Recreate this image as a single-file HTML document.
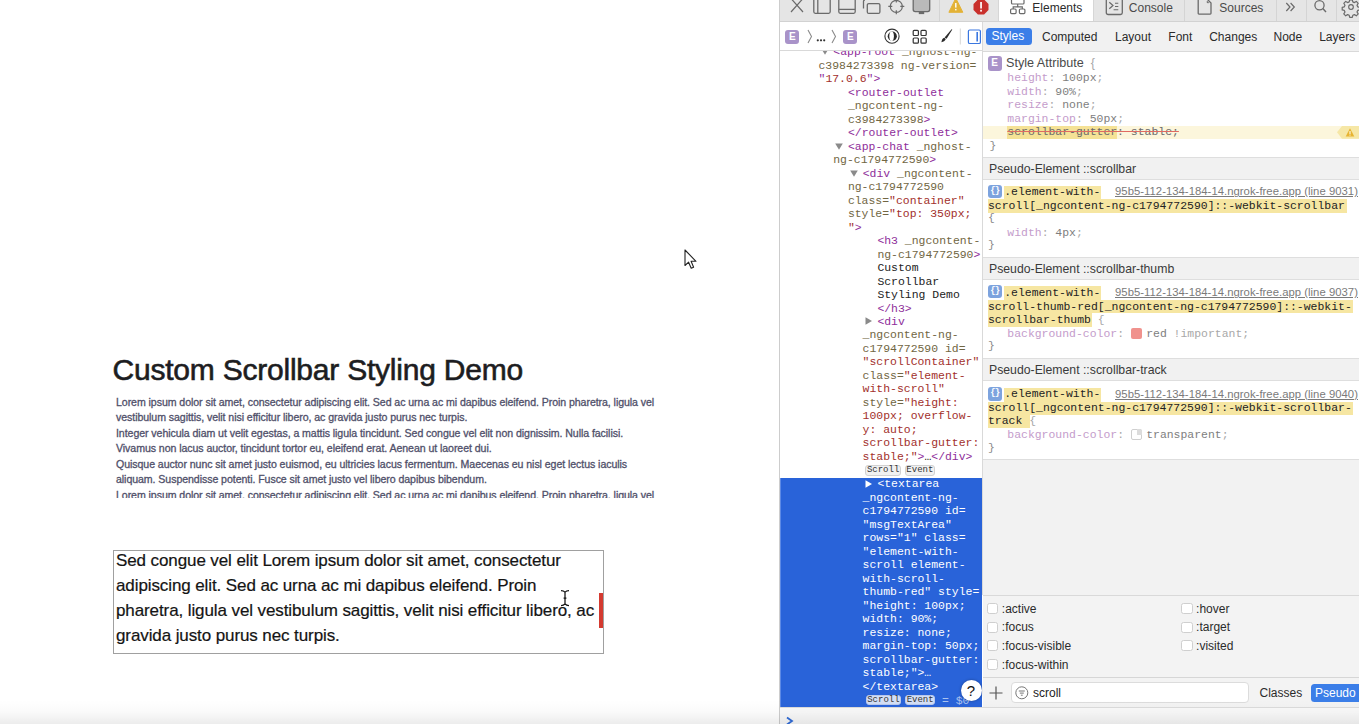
<!DOCTYPE html>
<html><head><meta charset="utf-8">
<style>
*{margin:0;padding:0;box-sizing:border-box}
html,body{width:1359px;height:724px;overflow:hidden;background:#fff;position:relative;font-family:"Liberation Sans",sans-serif}
.a{position:absolute;white-space:pre}
.b{position:absolute}
.tg{color:#8e2d9a}
.an{color:#716643}
.av{color:#a2302c}
.tx{color:#222}
.sel .tg,.sel .an,.sel .av,.sel .tx,.sel{color:#fff}
.pn{color:#c49ccb}
.pv{color:#7e7e7e}
.pu{color:#a8a8a8}
.hl{background:#f6e6a2}
.sa{color:#4a4a4a}
.lk{color:#8a8a8a;text-decoration:underline}
svg{position:absolute;overflow:visible}
</style></head><body>

<div class="b" style="left:0;top:0;width:779px;height:724px;background:#fff"></div>
<div class="a " style="left:112.50px;top:350.96px;font-size:30.00px;line-height:37.50px;font-family:'Liberation Sans',sans-serif;color:#1d1d21;letter-spacing:-0.22px;-webkit-text-stroke:0.6px #1d1d21">Custom Scrollbar Styling Demo</div>
<div class="a " style="left:116.00px;top:395.60px;font-size:10.60px;line-height:13.25px;font-family:'Liberation Sans',sans-serif;color:#50506a;letter-spacing:-0.07px;-webkit-text-stroke:0.3px #50506a">Lorem ipsum dolor sit amet, consectetur adipiscing elit. Sed ac urna ac mi dapibus eleifend. Proin pharetra, ligula vel</div>
<div class="a " style="left:116.00px;top:411.15px;font-size:10.60px;line-height:13.25px;font-family:'Liberation Sans',sans-serif;color:#50506a;letter-spacing:-0.07px;-webkit-text-stroke:0.3px #50506a">vestibulum sagittis, velit nisi efficitur libero, ac gravida justo purus nec turpis.</div>
<div class="a " style="left:116.00px;top:426.70px;font-size:10.60px;line-height:13.25px;font-family:'Liberation Sans',sans-serif;color:#50506a;letter-spacing:-0.07px;-webkit-text-stroke:0.3px #50506a">Integer vehicula diam ut velit egestas, a mattis ligula tincidunt. Sed congue vel elit non dignissim. Nulla facilisi.</div>
<div class="a " style="left:116.00px;top:442.25px;font-size:10.60px;line-height:13.25px;font-family:'Liberation Sans',sans-serif;color:#50506a;letter-spacing:-0.07px;-webkit-text-stroke:0.3px #50506a">Vivamus non lacus auctor, tincidunt tortor eu, eleifend erat. Aenean ut laoreet dui.</div>
<div class="a " style="left:116.00px;top:457.80px;font-size:10.60px;line-height:13.25px;font-family:'Liberation Sans',sans-serif;color:#50506a;letter-spacing:-0.07px;-webkit-text-stroke:0.3px #50506a">Quisque auctor nunc sit amet justo euismod, eu ultricies lacus fermentum. Maecenas eu nisl eget lectus iaculis</div>
<div class="a " style="left:116.00px;top:473.35px;font-size:10.60px;line-height:13.25px;font-family:'Liberation Sans',sans-serif;color:#50506a;letter-spacing:-0.07px;-webkit-text-stroke:0.3px #50506a">aliquam. Suspendisse potenti. Fusce sit amet justo vel libero dapibus bibendum.</div>
<div class="b" style="left:0;top:486px;width:779px;height:12.3px;overflow:hidden">
<div class="a " style="left:116.00px;top:2.90px;font-size:10.60px;line-height:13.25px;font-family:'Liberation Sans',sans-serif;color:#50506a;letter-spacing:-0.07px;-webkit-text-stroke:0.3px #50506a">Lorem ipsum dolor sit amet, consectetur adipiscing elit. Sed ac urna ac mi dapibus eleifend. Proin pharetra, ligula vel</div>
</div>
<div class="b" style="left:113.00px;top:550.00px;width:490.50px;height:103.70px;border:1px solid #a0a0a0;background:#fff"></div>
<div class="a " style="left:116.00px;top:549.98px;font-size:17.00px;line-height:21.25px;font-family:'Liberation Sans',sans-serif;color:#141414;letter-spacing:-0.1px;-webkit-text-stroke:0.2px #141414">Sed congue vel elit Lorem ipsum dolor sit amet, consectetur</div>
<div class="a " style="left:116.00px;top:574.98px;font-size:17.00px;line-height:21.25px;font-family:'Liberation Sans',sans-serif;color:#141414;letter-spacing:-0.1px;-webkit-text-stroke:0.2px #141414">adipiscing elit. Sed ac urna ac mi dapibus eleifend. Proin</div>
<div class="a " style="left:116.00px;top:599.98px;font-size:17.00px;line-height:21.25px;font-family:'Liberation Sans',sans-serif;color:#141414;letter-spacing:-0.1px;-webkit-text-stroke:0.2px #141414">pharetra, ligula vel vestibulum sagittis, velit nisi efficitur libero, ac</div>
<div class="a " style="left:116.00px;top:624.98px;font-size:17.00px;line-height:21.25px;font-family:'Liberation Sans',sans-serif;color:#141414;letter-spacing:-0.1px;-webkit-text-stroke:0.2px #141414">gravida justo purus nec turpis.</div>
<div class="b" style="left:598.50px;top:593.00px;width:4.00px;height:35.00px;background:#d43a30"></div>
<svg style="left:559px;top:589px" width="12" height="18" viewBox="0 0 12 18"><path d="M2 1.5C4 1.5 5 2 6 3.2 7 2 8 1.5 10 1.5M6 3.2V14.8M2 16.5C4 16.5 5 16 6 14.8 7 16 8 16.5 10 16.5M4.6 9H7.4" fill="none" stroke="#fff" stroke-width="2.2"/><path d="M2 1.5C4 1.5 5 2 6 3.2 7 2 8 1.5 10 1.5M6 3.2V14.8M2 16.5C4 16.5 5 16 6 14.8 7 16 8 16.5 10 16.5M4.6 9H7.4" fill="none" stroke="#111" stroke-width="1.25"/></svg>
<svg style="left:684px;top:249px" width="14" height="21" viewBox="0 0 14 21"><path d="M1 1 L1 16.5 L4.6 13.2 L7.2 19.3 L9.6 18.3 L7.1 12.3 L12 12.3 Z" fill="#fff" stroke="#222" stroke-width="1.1" stroke-linejoin="round"/></svg>
<div class="b" style="left:779px;top:0;width:580px;height:724px;background:#fff;border-left:1px solid #cdcdcd"></div>
<div class="b" style="left:780.00px;top:0.00px;width:579.00px;height:22.00px;background:#e5e5e5;border-bottom:1px solid #d2d2d2"></div>
<div class="b" style="left:998.00px;top:0.00px;width:95.50px;height:21.20px;background:#fff;border-left:1px solid #d6d6d6;border-right:1px solid #d6d6d6"></div>
<div class="b" style="left:938.50px;top:0.00px;width:1.00px;height:21.00px;background:#d4d4d4"></div>
<div class="b" style="left:1184.20px;top:0.00px;width:1.00px;height:21.00px;background:#d4d4d4"></div>
<div class="b" style="left:1275.50px;top:0.00px;width:1.00px;height:21.00px;background:#d4d4d4"></div>
<div class="b" style="left:1305.90px;top:0.00px;width:1.00px;height:21.00px;background:#d4d4d4"></div>
<div class="b" style="left:1335.70px;top:0.00px;width:1.00px;height:21.00px;background:#d4d4d4"></div>
<svg style="left:780px;top:0" width="160" height="21" viewBox="0 0 160 21"><path d="M11 -1.5L23 12M23 -1.5L11 12" stroke="#6a6a6a" stroke-width="1.2" fill="none"/><rect x="33.8" y="-2" width="16.4" height="15.3" rx="1.5" fill="none" stroke="#6a6a6a" stroke-width="1.3"/><path d="M37.8 -2V13" stroke="#6a6a6a" stroke-width="1.3"/><rect x="58.8" y="-2" width="16.4" height="15.3" rx="1.5" fill="none" stroke="#6a6a6a" stroke-width="1.3"/><path d="M58.8 9.4H75" stroke="#6a6a6a" stroke-width="1.3"/><path d="M83.5 8.5V1.5c0-1 .5-1.5 1.5-1.5M87 -1.5h8.5" fill="none" stroke="#6a6a6a" stroke-width="1.3"/><rect x="87.3" y="3.6" width="12.6" height="9.8" rx="1.5" fill="none" stroke="#6a6a6a" stroke-width="1.3"/><circle cx="116.3" cy="6.4" r="6" fill="none" stroke="#6a6a6a" stroke-width="1.2"/><path d="M116.3 -1.5V2.5M116.3 10.3V14.3M108.3 6.4H112.3M120.3 6.4H124.3" stroke="#6a6a6a" stroke-width="1.2"/><rect x="133.2" y="-2" width="16.5" height="13.6" rx="2" fill="#b9b9b9" stroke="#6a6a6a" stroke-width="1.3"/><rect x="138.8" y="11.5" width="5.4" height="2.6" fill="#6a6a6a"/></svg>
<svg style="left:940px;top:0" width="60" height="21" viewBox="0 0 60 21"><path d="M15.8 -1.8 L22.8 12.3 L8.9 12.3 Z" fill="#e3b236" stroke="#e3b236" stroke-width="1" stroke-linejoin="round"/><rect x="15.1" y="3" width="1.4" height="4.6" fill="#fff"/><rect x="15.1" y="8.9" width="1.4" height="1.5" fill="#fff"/><path d="M37.9 -0.5 L44.1 -0.5 L48.5 3.9 L48.5 10.1 L44.1 14.5 L37.9 14.5 L33.5 10.1 L33.5 3.9 Z" fill="#c9302c"/><rect x="40.2" y="2" width="1.7" height="6.5" fill="#fff"/><rect x="40.2" y="9.8" width="1.7" height="1.8" fill="#fff"/></svg>
<svg style="left:1008px;top:0" width="20" height="21" viewBox="0 0 20 21"><rect x="3.5" y="-2" width="12.5" height="6" rx="1" fill="none" stroke="#6a6a6a" stroke-width="1.2"/><path d="M9.7 4V6.8M5.2 9V6.8H14.3V9" fill="none" stroke="#6a6a6a" stroke-width="1.2"/><rect x="2.6" y="9" width="5.5" height="4.6" rx="1" fill="none" stroke="#6a6a6a" stroke-width="1.2"/><rect x="11.4" y="9" width="5.5" height="4.6" rx="1" fill="none" stroke="#6a6a6a" stroke-width="1.2"/></svg>
<div class="a " style="left:1032.30px;top:0.54px;font-size:12.00px;line-height:15.00px;font-family:'Liberation Sans',sans-serif;color:#2b2b2b">Elements</div>
<svg style="left:1104px;top:0" width="22" height="21" viewBox="0 0 22 21"><rect x="2.3" y="-1.5" width="16" height="16" rx="1.8" fill="none" stroke="#6a6a6a" stroke-width="1.3"/><path d="M5.3 2.2L9 5.5L5.3 8.8" fill="none" stroke="#6a6a6a" stroke-width="1.2"/><path d="M11 3.2H14.3M11 6.5H14.3M9.6 9.8H14.3" stroke="#6a6a6a" stroke-width="1.1"/></svg>
<div class="a " style="left:1128.80px;top:0.54px;font-size:12.00px;line-height:15.00px;font-family:'Liberation Sans',sans-serif;color:#4a4a4a">Console</div>
<svg style="left:1196px;top:0" width="18" height="21" viewBox="0 0 18 21"><path d="M3 -1.5H10.5L15 3V13.3c0 .5-.3.8-.8.8H3c-.5 0-.8-.3-.8-.8V-1.5" fill="none" stroke="#6a6a6a" stroke-width="1.3"/><path d="M10.8 1.5L12.5 3" stroke="#6a6a6a" stroke-width="1.3"/></svg>
<div class="a " style="left:1219.30px;top:0.54px;font-size:12.00px;line-height:15.00px;font-family:'Liberation Sans',sans-serif;color:#4a4a4a">Sources</div>
<svg style="left:1280px;top:0" width="79" height="21" viewBox="0 0 79 21"><path d="M6.3 3L10 7L6.3 11M10.6 3L14.3 7L10.6 11" fill="none" stroke="#6a6a6a" stroke-width="1.2"/><circle cx="39.5" cy="5.3" r="4.6" fill="none" stroke="#6a6a6a" stroke-width="1.3"/><path d="M42.8 8.6L46 12" stroke="#6a6a6a" stroke-width="1.4"/><g transform="translate(71,7)"><path d="M-1.3 -7.2h2.6l.5 2.1 1.6.7 1.9-1.2 1.9 1.9-1.2 1.9.7 1.6 2.1.5v2.6l-2.1.5-.7 1.6 1.2 1.9-1.9 1.9-1.9-1.2-1.6.7-.5 2.1h-2.6l-.5-2.1-1.6-.7-1.9 1.2-1.9-1.9 1.2-1.9-.7-1.6-2.1-.5v-2.6l2.1-.5.7-1.6-1.2-1.9 1.9-1.9 1.9 1.2 1.6-.7z" fill="none" stroke="#6a6a6a" stroke-width="1.2" stroke-linejoin="round"/><circle r="2.3" fill="none" stroke="#6a6a6a" stroke-width="1.2"/></g></svg>
<div class="b" style="left:780.00px;top:22.00px;width:202.00px;height:29.00px;background:#fff;border-bottom:1px solid #d9d9d9"></div>
<div class="b" style="left:982.00px;top:22.00px;width:377.00px;height:30.00px;background:#f1f1f1;border-bottom:1px solid #d9d9d9;border-left:1px solid #d9d9d9"></div>
<div class="b" style="left:785.40px;top:29.60px;width:14.00px;height:14.00px;background:#a993c9;border-radius:3px;color:#fff;font:bold 10px/14.00px 'Liberation Sans',sans-serif;text-align:center">E</div>
<div class="b" style="left:843.40px;top:29.60px;width:14.00px;height:14.00px;background:#a993c9;border-radius:3px;color:#fff;font:bold 10px/14.00px 'Liberation Sans',sans-serif;text-align:center">E</div>
<svg style="left:800px;top:21px" width="180" height="30" viewBox="0 0 180 30"><path d="M8 9L11.5 15.5L8 22" fill="none" stroke="#8a8a8a" stroke-width="1.1"/><path d="M32 9L35.5 15.5L32 22" fill="none" stroke="#8a8a8a" stroke-width="1.1"/><circle cx="17.8" cy="19.3" r="1.1" fill="#333"/><circle cx="21" cy="19.3" r="1.1" fill="#333"/><circle cx="24.2" cy="19.3" r="1.1" fill="#333"/><circle cx="92" cy="15.2" r="7.1" fill="none" stroke="#333" stroke-width="1.1"/><circle cx="92.3" cy="15.2" r="4.6" fill="#2a2a2a"/><ellipse cx="91.6" cy="15.2" rx="2.3" ry="4.7" fill="#fff"/><rect x="113.2" y="9.3" width="5.2" height="5.2" rx="1" fill="none" stroke="#333" stroke-width="1.2"/><rect x="121" y="9.3" width="5.2" height="5.2" rx="1" fill="none" stroke="#333" stroke-width="1.2"/><rect x="113.2" y="17" width="5.2" height="5.2" rx="1" fill="none" stroke="#333" stroke-width="1.2"/><rect x="121" y="17" width="5.2" height="5.2" rx="1" fill="none" stroke="#333" stroke-width="1.2"/><path d="M152.3 8.6L146.6 17.8 144.6 16.6 151.6 8.2Z" fill="#2a2a2a"/><path d="M144.3 16.8c-1.6.4-2.4 1.7-2.9 4.4 2-.4 3.6-1.2 4.4-3.2z" fill="#2a2a2a"/><path d="M160.3 7.5V23.5" stroke="#d6d6d6" stroke-width="1"/><rect x="168.4" y="9" width="12" height="13.5" rx="1.3" fill="none" stroke="#3a77e0" stroke-width="1.2"/><path d="M177.2 11V20.5" stroke="#3a77e0" stroke-width="1.6"/></svg>
<div class="b" style="left:986.20px;top:28.10px;width:45.60px;height:16.90px;background:#3b7ee8;border-radius:3.5px"></div>
<div class="a " style="left:991.50px;top:28.94px;font-size:12.00px;line-height:15.00px;font-family:'Liberation Sans',sans-serif;color:#fff">Styles</div>
<div class="a " style="left:1042.00px;top:29.54px;font-size:12.00px;line-height:15.00px;font-family:'Liberation Sans',sans-serif;color:#2b2b2b">Computed</div>
<div class="a " style="left:1115.00px;top:29.54px;font-size:12.00px;line-height:15.00px;font-family:'Liberation Sans',sans-serif;color:#2b2b2b">Layout</div>
<div class="a " style="left:1168.30px;top:29.54px;font-size:12.00px;line-height:15.00px;font-family:'Liberation Sans',sans-serif;color:#2b2b2b">Font</div>
<div class="a " style="left:1209.20px;top:29.54px;font-size:12.00px;line-height:15.00px;font-family:'Liberation Sans',sans-serif;color:#2b2b2b">Changes</div>
<div class="a " style="left:1273.50px;top:29.54px;font-size:12.00px;line-height:15.00px;font-family:'Liberation Sans',sans-serif;color:#2b2b2b">Node</div>
<div class="a " style="left:1319.20px;top:29.54px;font-size:12.00px;line-height:15.00px;font-family:'Liberation Sans',sans-serif;color:#2b2b2b">Layers</div>
<div class="b" style="left:780px;top:51px;width:202px;height:656px;overflow:hidden">
<div class="b" style="left:-780px;top:-51px;width:1359px;height:724px">
<svg style="left:820.70px;top:48.40px" width="8" height="7" viewBox="0 0 8 7"><path d="M0.2 0.5H7.8L4 6.8Z" fill="#8a8a8a"/></svg>
<div class="a " style="left:833.30px;top:45.40px;font-size:11.45px;line-height:14.31px;font-family:'Liberation Mono',monospace;"><span class="tg">&lt;app-root</span><span class="an"> _nghost-ng-</span></div>
<div class="a " style="left:818.50px;top:58.88px;font-size:11.45px;line-height:14.31px;font-family:'Liberation Mono',monospace;"><span class="an">c3984273398 ng-version=</span></div>
<div class="a " style="left:818.50px;top:72.36px;font-size:11.45px;line-height:14.31px;font-family:'Liberation Mono',monospace;"><span class="tg">"</span><span class="av">17.0.6</span><span class="tg">"&gt;</span></div>
<div class="a " style="left:848.00px;top:85.84px;font-size:11.45px;line-height:14.31px;font-family:'Liberation Mono',monospace;"><span class="tg">&lt;router-outlet</span></div>
<div class="a " style="left:848.00px;top:99.32px;font-size:11.45px;line-height:14.31px;font-family:'Liberation Mono',monospace;"><span class="an">_ngcontent-ng-</span></div>
<div class="a " style="left:848.00px;top:112.80px;font-size:11.45px;line-height:14.31px;font-family:'Liberation Mono',monospace;"><span class="an">c3984273398</span><span class="tg">&gt;</span></div>
<div class="a " style="left:848.00px;top:126.28px;font-size:11.45px;line-height:14.31px;font-family:'Liberation Mono',monospace;"><span class="tg">&lt;/router-outlet&gt;</span></div>
<svg style="left:835.40px;top:142.76px" width="8" height="7" viewBox="0 0 8 7"><path d="M0.2 0.5H7.8L4 6.8Z" fill="#8a8a8a"/></svg>
<div class="a " style="left:848.00px;top:139.76px;font-size:11.45px;line-height:14.31px;font-family:'Liberation Mono',monospace;"><span class="tg">&lt;app-chat</span><span class="an"> _nghost-</span></div>
<div class="a " style="left:833.20px;top:153.24px;font-size:11.45px;line-height:14.31px;font-family:'Liberation Mono',monospace;"><span class="an">ng-c1794772590</span><span class="tg">&gt;</span></div>
<svg style="left:850.10px;top:169.72px" width="8" height="7" viewBox="0 0 8 7"><path d="M0.2 0.5H7.8L4 6.8Z" fill="#8a8a8a"/></svg>
<div class="a " style="left:862.70px;top:166.72px;font-size:11.45px;line-height:14.31px;font-family:'Liberation Mono',monospace;"><span class="tg">&lt;div</span><span class="an"> _ngcontent-</span></div>
<div class="a " style="left:847.90px;top:180.20px;font-size:11.45px;line-height:14.31px;font-family:'Liberation Mono',monospace;"><span class="an">ng-c1794772590</span></div>
<div class="a " style="left:847.90px;top:193.68px;font-size:11.45px;line-height:14.31px;font-family:'Liberation Mono',monospace;"><span class="an">class=</span><span class="av">"container"</span></div>
<div class="a " style="left:847.90px;top:207.16px;font-size:11.45px;line-height:14.31px;font-family:'Liberation Mono',monospace;"><span class="an">style=</span><span class="av">"top: 350px;</span></div>
<div class="a " style="left:847.90px;top:220.64px;font-size:11.45px;line-height:14.31px;font-family:'Liberation Mono',monospace;"><span class="av">"</span><span class="tg">&gt;</span></div>
<div class="a " style="left:877.40px;top:234.12px;font-size:11.45px;line-height:14.31px;font-family:'Liberation Mono',monospace;"><span class="tg">&lt;h3</span><span class="an"> _ngcontent-</span></div>
<div class="a " style="left:877.40px;top:247.60px;font-size:11.45px;line-height:14.31px;font-family:'Liberation Mono',monospace;"><span class="an">ng-c1794772590</span><span class="tg">&gt;</span></div>
<div class="a " style="left:877.40px;top:261.08px;font-size:11.45px;line-height:14.31px;font-family:'Liberation Mono',monospace;"><span class="tx">Custom</span></div>
<div class="a " style="left:877.40px;top:274.56px;font-size:11.45px;line-height:14.31px;font-family:'Liberation Mono',monospace;"><span class="tx">Scrollbar</span></div>
<div class="a " style="left:877.40px;top:288.04px;font-size:11.45px;line-height:14.31px;font-family:'Liberation Mono',monospace;"><span class="tx">Styling Demo</span></div>
<div class="a " style="left:877.40px;top:301.52px;font-size:11.45px;line-height:14.31px;font-family:'Liberation Mono',monospace;"><span class="tg">&lt;/h3&gt;</span></div>
<svg style="left:865.20px;top:317.20px" width="8" height="8" viewBox="0 0 8 8"><path d="M0.5 0.2V7.8L7 4Z" fill="#8a8a8a"/></svg>
<div class="a " style="left:877.40px;top:315.00px;font-size:11.45px;line-height:14.31px;font-family:'Liberation Mono',monospace;"><span class="tg">&lt;div</span></div>
<div class="a " style="left:862.60px;top:328.48px;font-size:11.45px;line-height:14.31px;font-family:'Liberation Mono',monospace;"><span class="an">_ngcontent-ng-</span></div>
<div class="a " style="left:862.60px;top:341.96px;font-size:11.45px;line-height:14.31px;font-family:'Liberation Mono',monospace;"><span class="an">c1794772590 id=</span></div>
<div class="a " style="left:862.60px;top:355.44px;font-size:11.45px;line-height:14.31px;font-family:'Liberation Mono',monospace;"><span class="av">"scrollContainer"</span></div>
<div class="a " style="left:862.60px;top:368.92px;font-size:11.45px;line-height:14.31px;font-family:'Liberation Mono',monospace;"><span class="an">class=</span><span class="av">"element-</span></div>
<div class="a " style="left:862.60px;top:382.40px;font-size:11.45px;line-height:14.31px;font-family:'Liberation Mono',monospace;"><span class="av">with-scroll"</span></div>
<div class="a " style="left:862.60px;top:395.88px;font-size:11.45px;line-height:14.31px;font-family:'Liberation Mono',monospace;"><span class="an">style=</span><span class="av">"height:</span></div>
<div class="a " style="left:862.60px;top:409.36px;font-size:11.45px;line-height:14.31px;font-family:'Liberation Mono',monospace;"><span class="av">100px; overflow-</span></div>
<div class="a " style="left:862.60px;top:422.84px;font-size:11.45px;line-height:14.31px;font-family:'Liberation Mono',monospace;"><span class="av">y: auto;</span></div>
<div class="a " style="left:862.60px;top:436.32px;font-size:11.45px;line-height:14.31px;font-family:'Liberation Mono',monospace;"><span class="av">scrollbar-gutter:</span></div>
<div class="a " style="left:862.60px;top:449.80px;font-size:11.45px;line-height:14.31px;font-family:'Liberation Mono',monospace;"><span class="av">stable;"</span><span class="tg">&gt;</span><span class="tx">…</span><span class="tg">&lt;/div&gt;</span></div>
<div class="b" style="left:865.20px;top:465.20px;width:35.80px;height:10.6px;background:#f1f1f1;border:1px solid #d2d2d2;border-radius:3px;font:9px/9px 'Liberation Mono',monospace;color:#333;text-align:center;padding-top:0.3px">Scroll</div>
<div class="b" style="left:904.60px;top:465.20px;width:30.50px;height:10.6px;background:#f1f1f1;border:1px solid #d2d2d2;border-radius:3px;font:9px/9px 'Liberation Mono',monospace;color:#333;text-align:center;padding-top:0.3px">Event</div>
<div class="b" style="left:780.00px;top:477.50px;width:202.00px;height:229.00px;background:#2963d9;border-left:1px solid #5d8ae6"></div>
<svg style="left:865.20px;top:479.60px" width="8" height="8" viewBox="0 0 8 8"><path d="M0.5 0.2V7.8L7 4Z" fill="#fff"/></svg>
<div class="a " style="left:877.40px;top:477.40px;font-size:11.45px;line-height:14.31px;font-family:'Liberation Mono',monospace;color:#fff">&lt;textarea</div>
<div class="a " style="left:862.60px;top:490.88px;font-size:11.45px;line-height:14.31px;font-family:'Liberation Mono',monospace;color:#fff">_ngcontent-ng-</div>
<div class="a " style="left:862.60px;top:504.36px;font-size:11.45px;line-height:14.31px;font-family:'Liberation Mono',monospace;color:#fff">c1794772590 id=</div>
<div class="a " style="left:862.60px;top:517.84px;font-size:11.45px;line-height:14.31px;font-family:'Liberation Mono',monospace;color:#fff">"msgTextArea"</div>
<div class="a " style="left:862.60px;top:531.32px;font-size:11.45px;line-height:14.31px;font-family:'Liberation Mono',monospace;color:#fff">rows="1" class=</div>
<div class="a " style="left:862.60px;top:544.80px;font-size:11.45px;line-height:14.31px;font-family:'Liberation Mono',monospace;color:#fff">"element-with-</div>
<div class="a " style="left:862.60px;top:558.28px;font-size:11.45px;line-height:14.31px;font-family:'Liberation Mono',monospace;color:#fff">scroll element-</div>
<div class="a " style="left:862.60px;top:571.76px;font-size:11.45px;line-height:14.31px;font-family:'Liberation Mono',monospace;color:#fff">with-scroll-</div>
<div class="a " style="left:862.60px;top:585.24px;font-size:11.45px;line-height:14.31px;font-family:'Liberation Mono',monospace;color:#fff">thumb-red" style=</div>
<div class="a " style="left:862.60px;top:598.72px;font-size:11.45px;line-height:14.31px;font-family:'Liberation Mono',monospace;color:#fff">"height: 100px;</div>
<div class="a " style="left:862.60px;top:612.20px;font-size:11.45px;line-height:14.31px;font-family:'Liberation Mono',monospace;color:#fff">width: 90%;</div>
<div class="a " style="left:862.60px;top:625.68px;font-size:11.45px;line-height:14.31px;font-family:'Liberation Mono',monospace;color:#fff">resize: none;</div>
<div class="a " style="left:862.60px;top:639.16px;font-size:11.45px;line-height:14.31px;font-family:'Liberation Mono',monospace;color:#fff">margin-top: 50px;</div>
<div class="a " style="left:862.60px;top:652.64px;font-size:11.45px;line-height:14.31px;font-family:'Liberation Mono',monospace;color:#fff">scrollbar-gutter:</div>
<div class="a " style="left:862.60px;top:666.12px;font-size:11.45px;line-height:14.31px;font-family:'Liberation Mono',monospace;color:#fff">stable;"&gt;…</div>
<div class="a " style="left:862.60px;top:679.60px;font-size:11.45px;line-height:14.31px;font-family:'Liberation Mono',monospace;color:#fff">&lt;/textarea&gt;</div>
<div class="b" style="left:865.50px;top:694.80px;width:35.80px;height:10.6px;background:#d3def5;border:1px solid #b9c8ec;border-radius:3px;font:9px/9px 'Liberation Mono',monospace;color:#333;text-align:center;padding-top:0.3px">Scroll</div>
<div class="b" style="left:904.90px;top:694.80px;width:30.50px;height:10.6px;background:#d3def5;border:1px solid #b9c8ec;border-radius:3px;font:9px/9px 'Liberation Mono',monospace;color:#333;text-align:center;padding-top:0.3px">Event</div>
<div class="a " style="left:942.00px;top:693.80px;font-size:11.45px;line-height:14.31px;font-family:'Liberation Mono',monospace;color:#a9c2f0">= $0</div>
</div></div>
<div class="b" style="left:960.5px;top:679.8px;width:21px;height:21px;border-radius:50%;background:#fff;box-shadow:0 0 3px rgba(0,0,0,.35);color:#111;font:15px/21px 'Liberation Sans',sans-serif;text-align:center">?</div>
<div class="b" style="left:780.00px;top:706.50px;width:579.00px;height:17.50px;background:#f9f9f9;border-top:1px solid #dcdcdc"></div>
<svg style="left:784px;top:713px" width="14" height="12" viewBox="0 0 14 12"><path d="M3 4.5L8 8L3 11.5" fill="none" stroke="#2f6bd8" stroke-width="1.8"/></svg>
<div class="b" style="left:982.00px;top:52.00px;width:377.00px;height:543.00px;background:#fff;border-left:1px solid #d9d9d9"></div>
<div class="b" style="left:987.50px;top:56.30px;width:14.40px;height:14.30px;background:#a993c9;border-radius:3px;color:#fff;font:bold 10px/14.30px 'Liberation Sans',sans-serif;text-align:center">E</div>
<div class="a " style="left:1006.00px;top:55.96px;font-size:12.60px;line-height:15.75px;font-family:'Liberation Sans',sans-serif;"><span class="sa">Style Attribute</span><span class="pu">  {</span></div>
<div class="a " style="left:1007.30px;top:71.20px;font-size:11.45px;line-height:14.31px;font-family:'Liberation Mono',monospace;"><span class="pn">height</span><span class="pu">: </span><span class="pv">100px</span><span class="pu">;</span></div>
<div class="a " style="left:1007.30px;top:84.68px;font-size:11.45px;line-height:14.31px;font-family:'Liberation Mono',monospace;"><span class="pn">width</span><span class="pu">: </span><span class="pv">90%</span><span class="pu">;</span></div>
<div class="a " style="left:1007.30px;top:98.16px;font-size:11.45px;line-height:14.31px;font-family:'Liberation Mono',monospace;"><span class="pn">resize</span><span class="pu">: </span><span class="pv">none</span><span class="pu">;</span></div>
<div class="a " style="left:1007.30px;top:111.64px;font-size:11.45px;line-height:14.31px;font-family:'Liberation Mono',monospace;"><span class="pn">margin-top</span><span class="pu">: </span><span class="pv">50px</span><span class="pu">;</span></div>
<div class="b" style="left:983.00px;top:126.30px;width:376.00px;height:12.70px;background:#fcf6dc"></div>
<div class="b" style="left:1007.30px;top:126.30px;width:110.00px;height:12.70px;background:#f5e296"></div>
<div class="a " style="left:1007.30px;top:125.10px;font-size:11.45px;line-height:14.31px;font-family:'Liberation Mono',monospace;color:#6a6a6a;text-decoration:line-through;text-decoration-color:#e06a62">scrollbar-gutter: stable;</div>
<svg style="left:1337px;top:126.3px" width="22" height="12.7" viewBox="0 0 22 12.7"><path d="M0 6.35L5 0H22V12.7H5Z" fill="#f6e7a6"/><path d="M13 2.3L17.3 10.4H8.7Z" fill="#e7b431"/><rect x="12.5" y="5" width="1" height="3" fill="#fff"/><rect x="12.5" y="8.6" width="1" height="1" fill="#fff"/></svg>
<div class="a " style="left:989.50px;top:138.50px;font-size:11.45px;line-height:14.31px;font-family:'Liberation Mono',monospace;color:#8a8a8a">}</div>
<div class="b" style="left:983.00px;top:156.70px;width:376.00px;height:23.50px;background:#f1f1f1;border-top:1px solid #dedede;border-bottom:1px solid #dedede"></div>
<div class="a " style="left:989.00px;top:162.10px;font-size:12.25px;line-height:15.31px;font-family:'Liberation Sans',sans-serif;color:#3a3a3a">Pseudo-Element ::scrollbar</div>
<div class="b" style="left:983.00px;top:257.40px;width:376.00px;height:23.10px;background:#f1f1f1;border-top:1px solid #dedede;border-bottom:1px solid #dedede"></div>
<div class="a " style="left:989.00px;top:262.20px;font-size:12.25px;line-height:15.31px;font-family:'Liberation Sans',sans-serif;color:#3a3a3a">Pseudo-Element ::scrollbar-thumb</div>
<div class="b" style="left:983.00px;top:357.80px;width:376.00px;height:23.00px;background:#f1f1f1;border-top:1px solid #dedede;border-bottom:1px solid #dedede"></div>
<div class="a " style="left:989.00px;top:362.50px;font-size:12.25px;line-height:15.31px;font-family:'Liberation Sans',sans-serif;color:#3a3a3a">Pseudo-Element ::scrollbar-track</div>
<div class="b" style="left:987.5px;top:184.60px;width:14.5px;height:13.6px;background:#7da3de;border-radius:3px"></div>
<div class="a" style="left:987.5px;top:184.80px;width:14.5px;text-align:center;font:bold 9px/13px 'Liberation Mono',monospace;color:#fff;letter-spacing:-1px">{}</div>
<div class="b" style="left:1004.20px;top:185.90px;width:97.00px;height:13.50px;background:#f6e6a2"></div>
<div class="a " style="left:1004.20px;top:185.20px;font-size:11.45px;line-height:14.31px;font-family:'Liberation Mono',monospace;color:#222">.element-with-</div>
<div class="a " style="left:1115.00px;top:184.42px;font-size:11.30px;line-height:14.12px;font-family:'Liberation Sans',sans-serif;color:#7a7a7a;text-decoration:underline;letter-spacing:0.03px">95b5-112-134-184-14.ngrok-free.app (line 9031)</div>
<div class="b" style="left:988.00px;top:199.40px;width:358.50px;height:13.40px;background:#f6e6a2"></div>
<div class="a " style="left:988.00px;top:198.70px;font-size:11.45px;line-height:14.31px;font-family:'Liberation Mono',monospace;color:#222">scroll[_ngcontent-ng-c1794772590]::-webkit-scrollbar</div>
<div class="a " style="left:988.00px;top:211.40px;font-size:11.45px;line-height:14.31px;font-family:'Liberation Mono',monospace;color:#8a8a8a">{</div>
<div class="a " style="left:1007.30px;top:225.60px;font-size:11.45px;line-height:14.31px;font-family:'Liberation Mono',monospace;"><span class="pn">width</span><span class="pu">: </span><span class="pv">4px</span><span class="pu">;</span></div>
<div class="a " style="left:988.00px;top:238.40px;font-size:11.45px;line-height:14.31px;font-family:'Liberation Mono',monospace;color:#8a8a8a">}</div>
<div class="b" style="left:987.5px;top:284.60px;width:14.5px;height:13.6px;background:#7da3de;border-radius:3px"></div>
<div class="a" style="left:987.5px;top:284.80px;width:14.5px;text-align:center;font:bold 9px/13px 'Liberation Mono',monospace;color:#fff;letter-spacing:-1px">{}</div>
<div class="b" style="left:1004.20px;top:286.00px;width:97.00px;height:13.90px;background:#f6e6a2"></div>
<div class="a " style="left:1004.20px;top:286.10px;font-size:11.45px;line-height:14.31px;font-family:'Liberation Mono',monospace;color:#222">.element-with-</div>
<div class="a " style="left:1115.00px;top:285.32px;font-size:11.30px;line-height:14.12px;font-family:'Liberation Sans',sans-serif;color:#7a7a7a;text-decoration:underline;letter-spacing:0.03px">95b5-112-134-184-14.ngrok-free.app (line 9037)</div>
<div class="b" style="left:988.00px;top:299.90px;width:365.00px;height:13.40px;background:#f6e6a2"></div>
<div class="a " style="left:988.00px;top:299.60px;font-size:11.45px;line-height:14.31px;font-family:'Liberation Mono',monospace;color:#222">scroll-thumb-red[_ngcontent-ng-c1794772590]::-webkit-</div>
<div class="b" style="left:988.00px;top:313.30px;width:104.00px;height:13.40px;background:#f6e6a2"></div>
<div class="a " style="left:988.00px;top:313.00px;font-size:11.45px;line-height:14.31px;font-family:'Liberation Mono',monospace;color:#222"><span class="tx">scrollbar-thumb</span><span class="pu"> {</span></div>
<div class="a " style="left:1007.30px;top:326.50px;font-size:11.45px;line-height:14.31px;font-family:'Liberation Mono',monospace;"><span class="pn">background-color</span><span class="pu">: </span><span style="display:inline-block;width:15.3px"></span><span class="pv">red</span><span class="pu"> !important;</span></div>
<div class="b" style="left:1131.00px;top:328.30px;width:11.00px;height:10.90px;background:#f0928d;border-radius:2px"></div>
<div class="a " style="left:988.00px;top:339.10px;font-size:11.45px;line-height:14.31px;font-family:'Liberation Mono',monospace;color:#8a8a8a">}</div>
<div class="b" style="left:987.5px;top:387.20px;width:14.5px;height:13.6px;background:#7da3de;border-radius:3px"></div>
<div class="a" style="left:987.5px;top:387.40px;width:14.5px;text-align:center;font:bold 9px/13px 'Liberation Mono',monospace;color:#fff;letter-spacing:-1px">{}</div>
<div class="b" style="left:1004.20px;top:388.00px;width:97.00px;height:13.50px;background:#f6e6a2"></div>
<div class="a " style="left:1004.20px;top:387.40px;font-size:11.45px;line-height:14.31px;font-family:'Liberation Mono',monospace;color:#222">.element-with-</div>
<div class="a " style="left:1115.00px;top:386.62px;font-size:11.30px;line-height:14.12px;font-family:'Liberation Sans',sans-serif;color:#7a7a7a;text-decoration:underline;letter-spacing:0.03px">95b5-112-134-184-14.ngrok-free.app (line 9040)</div>
<div class="b" style="left:988.00px;top:401.50px;width:365.00px;height:13.40px;background:#f6e6a2"></div>
<div class="a " style="left:988.00px;top:400.70px;font-size:11.45px;line-height:14.31px;font-family:'Liberation Mono',monospace;color:#222">scroll[_ngcontent-ng-c1794772590]::-webkit-scrollbar-</div>
<div class="b" style="left:988.00px;top:414.90px;width:42.00px;height:13.40px;background:#f6e6a2"></div>
<div class="a " style="left:988.00px;top:414.10px;font-size:11.45px;line-height:14.31px;font-family:'Liberation Mono',monospace;color:#222"><span class="tx">track</span><span class="pu"> {</span></div>
<div class="a " style="left:1007.30px;top:427.50px;font-size:11.45px;line-height:14.31px;font-family:'Liberation Mono',monospace;"><span class="pn">background-color</span><span class="pu">: </span><span style="display:inline-block;width:15.3px"></span><span class="pv">transparent</span><span class="pu">;</span></div>
<div class="b" style="left:1131.00px;top:429.30px;width:11.00px;height:10.90px;background:#fff;border:1px solid #cfcfcf;border-radius:2px"></div>
<div class="b" style="left:1136.50px;top:429.30px;width:5.50px;height:5.50px;background:#dcdcdc;border-radius:0 2px 0 0"></div>
<div class="a " style="left:988.00px;top:440.80px;font-size:11.45px;line-height:14.31px;font-family:'Liberation Mono',monospace;color:#8a8a8a">}</div>
<div class="b" style="left:983.00px;top:459.20px;width:376.00px;height:136.10px;background:#f2f2f2;border-top:1px solid #dedede"></div>
<div class="b" style="left:983.00px;top:595.30px;width:376.00px;height:81.70px;background:#f3f3f3;border-top:1px solid #d9d9d9"></div>
<div class="b" style="left:987.00px;top:602.90px;width:11.40px;height:11.20px;background:#fff;border:1px solid #cfcfcf;border-radius:2.5px"></div>
<div class="a " style="left:1001.80px;top:601.54px;font-size:12.00px;line-height:15.00px;font-family:'Liberation Sans',sans-serif;color:#2b2b2b">:active</div>
<div class="b" style="left:987.00px;top:621.60px;width:11.40px;height:11.20px;background:#fff;border:1px solid #cfcfcf;border-radius:2.5px"></div>
<div class="a " style="left:1001.80px;top:620.24px;font-size:12.00px;line-height:15.00px;font-family:'Liberation Sans',sans-serif;color:#2b2b2b">:focus</div>
<div class="b" style="left:987.00px;top:640.30px;width:11.40px;height:11.20px;background:#fff;border:1px solid #cfcfcf;border-radius:2.5px"></div>
<div class="a " style="left:1001.80px;top:638.94px;font-size:12.00px;line-height:15.00px;font-family:'Liberation Sans',sans-serif;color:#2b2b2b">:focus-visible</div>
<div class="b" style="left:987.00px;top:659.00px;width:11.40px;height:11.20px;background:#fff;border:1px solid #cfcfcf;border-radius:2.5px"></div>
<div class="a " style="left:1001.80px;top:657.64px;font-size:12.00px;line-height:15.00px;font-family:'Liberation Sans',sans-serif;color:#2b2b2b">:focus-within</div>
<div class="b" style="left:1181.30px;top:602.90px;width:11.40px;height:11.20px;background:#fff;border:1px solid #cfcfcf;border-radius:2.5px"></div>
<div class="a " style="left:1196.10px;top:601.54px;font-size:12.00px;line-height:15.00px;font-family:'Liberation Sans',sans-serif;color:#2b2b2b">:hover</div>
<div class="b" style="left:1181.30px;top:621.60px;width:11.40px;height:11.20px;background:#fff;border:1px solid #cfcfcf;border-radius:2.5px"></div>
<div class="a " style="left:1196.10px;top:620.24px;font-size:12.00px;line-height:15.00px;font-family:'Liberation Sans',sans-serif;color:#2b2b2b">:target</div>
<div class="b" style="left:1181.30px;top:640.30px;width:11.40px;height:11.20px;background:#fff;border:1px solid #cfcfcf;border-radius:2.5px"></div>
<div class="a " style="left:1196.10px;top:638.94px;font-size:12.00px;line-height:15.00px;font-family:'Liberation Sans',sans-serif;color:#2b2b2b">:visited</div>
<div class="b" style="left:983.00px;top:677.00px;width:376.00px;height:29.50px;background:#f3f3f3;border-top:1px solid #d6d6d6"></div>
<svg style="left:988px;top:685px" width="16" height="16" viewBox="0 0 16 16"><path d="M8 1.5V14.5M1.5 8H14.5" stroke="#555" stroke-width="1.2"/></svg>
<div class="b" style="left:1010.70px;top:681.80px;width:238.40px;height:21.50px;background:#fff;border:1px solid #dcdcdc;border-radius:4px"></div>
<svg style="left:1014px;top:685px" width="16" height="16" viewBox="0 0 16 16"><circle cx="7.8" cy="7.8" r="6" fill="none" stroke="#777" stroke-width="1"/><path d="M4.8 6H10.8M5.8 8.1H9.8M6.9 10.2H8.7" stroke="#777" stroke-width="1"/></svg>
<div class="a " style="left:1033.00px;top:685.64px;font-size:12.00px;line-height:15.00px;font-family:'Liberation Sans',sans-serif;color:#222">scroll</div>
<div class="a " style="left:1259.50px;top:685.64px;font-size:12.00px;line-height:15.00px;font-family:'Liberation Sans',sans-serif;color:#2b2b2b">Classes</div>
<div class="b" style="left:1311.30px;top:683.70px;width:50.70px;height:18.20px;background:#3b7ee8;border-radius:3.5px"></div>
<div class="a " style="left:1315.00px;top:685.64px;font-size:12.00px;line-height:15.00px;font-family:'Liberation Sans',sans-serif;color:#fff">Pseudo</div>
<div class="b" style="left:0;top:700px;width:1359px;height:24px;background:linear-gradient(rgba(0,0,0,0),rgba(0,0,0,.02) 50%,rgba(0,0,0,.075));pointer-events:none"></div>
</body></html>
